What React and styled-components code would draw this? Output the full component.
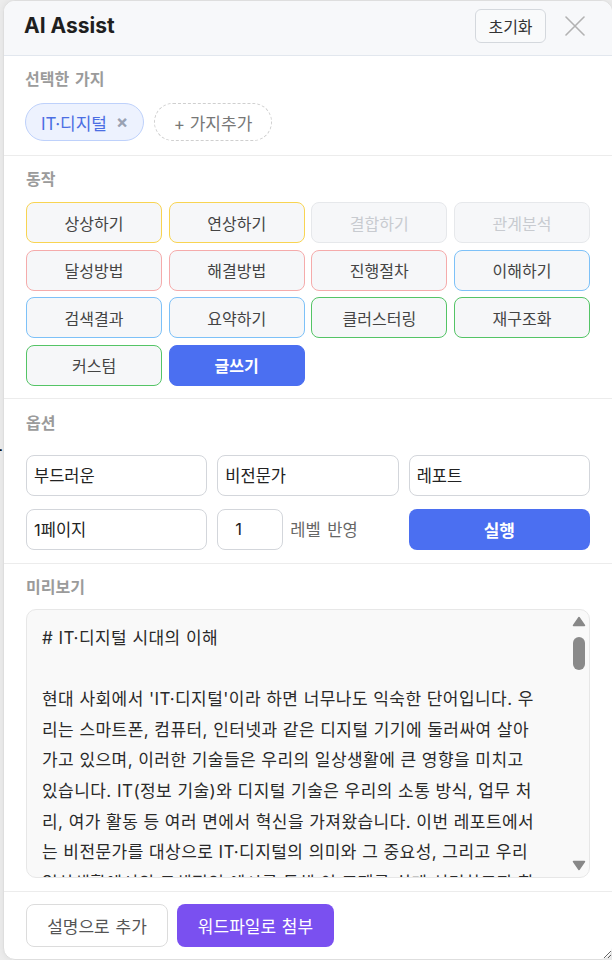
import React from 'react';
import styled, { createGlobalStyle, css } from 'styled-components';

const Global = createGlobalStyle`
  html, body { margin: 0; padding: 0; }
  body {
    background: #ececec;
    overflow: hidden;
    font-family: Inter, "Noto Sans CJK KR", sans-serif;
    color: #222;
  }
  * { box-sizing: border-box; }
`;

const Stage = styled.div`
  position: relative;
  height: 960px;
  padding-left: 3px;
`;

const UnderText = styled.span`
  position: absolute;
  left: -20px;
  top: 430px;
  font-size: 25px;
  line-height: 32px;
  color: #111;
  font-family: "Noto Sans CJK KR", sans-serif;
`;

const Panel = styled.div`
  position: relative;
  width: 610px;
  height: 960px;
  background: #fff;
  border-radius: 12px;
  border: 1px solid #dedede;
  box-shadow: 0 0 6px rgba(0, 0, 0, 0.06);
  display: flex;
  flex-direction: column;
  overflow: hidden;
  resize: both;
`;

const Header = styled.div`
  height: 55px;
  flex: none;
  display: flex;
  align-items: center;
  padding: 0 25px 0 20px;
  background: #f7f8fa;
  border-bottom: 1px solid #e2e7ee;
`;

const Title = styled.h1`
  margin: 0;
  flex: 1;
  font-size: 21px;
  font-weight: 700;
  color: #1f1f1f;
  line-height: 24px;
  margin-top: -5px;
`;

const ResetButton = styled.button`
  height: 34px;
  width: 71px;
  margin-top: -5px;
  border: 1px solid #d4d8dd;
  border-radius: 6px;
  background: #f9fafb;
  font-family: inherit;
  font-size: 16px;
  color: #333;
  padding: 0;
`;

const CloseButton = styled.button`
  width: 24px;
  height: 24px;
  margin-left: 17px;
  margin-top: -5px;
  border: none;
  background: none;
  padding: 0;
  display: flex;
  align-items: center;
  justify-content: center;
`;

const Section = styled.section`
  flex: none;
  padding: ${(p) => p.$pad};
  border-bottom: 1px solid #ececec;
  display: flex;
  flex-direction: column;
  gap: ${(p) => p.$gap}px;
`;

const Label = styled.div`
  font-size: 16px;
  font-weight: 700;
  line-height: 20px;
  color: #9b9b9b;
  word-spacing: 2px;
`;

const ChipRow = styled.div`
  display: flex;
  gap: 10px;
`;

const Chip = styled.div`
  height: 38px;
  display: inline-flex;
  align-items: center;
  border-radius: 19px;
  font-size: 17px;
  ${(p) =>
    p.$dashed
      ? css`
          width: 118px;
          justify-content: center;
          border: 1px dashed #cfcfcf;
          color: #777;
          background: #fff;
        `
      : css`
          width: 119px;
          padding-left: 15px;
          gap: 9px;
          border: 1px solid #bed1fb;
          background: #edf2fe;
          color: #4b6ee3;
        `}
`;

const ChipX = styled.span`
  color: #9aa2b3;
  font-size: 18px;
  font-weight: 700;
  line-height: 1;
`;

const ActionGrid = styled.div`
  display: grid;
  grid-template-columns: repeat(4, 1fr);
  gap: 6.5px;
`;

const borderColors = {
  yellow: '#f8d452',
  red: '#f5abab',
  blue: '#7dc1f8',
  green: '#54c466',
  disabled: '#e6e8eb',
};

const ActionButton = styled.button`
  height: 41px;
  border-radius: 8px;
  font-family: inherit;
  font-size: 16px;
  padding: 0;
  ${(p) =>
    p.$variant === 'active'
      ? css`
          background: #4b6ff1;
          border: 1px solid #4b6ff1;
          color: #fff;
          font-weight: 700;
        `
      : css`
          background: #f6f7f9;
          border: 1px solid ${borderColors[p.$variant]};
          color: ${p.$variant === 'disabled' ? '#c8cbd0' : '#444'};
        `}
`;

const OptionGrid = styled.div`
  display: grid;
  grid-template-columns: repeat(3, 1fr);
  column-gap: 10px;
  row-gap: 13px;
`;

const Field = styled.div`
  height: 41px;
  width: ${(p) => (p.$w ? `${p.$w}px` : '100%')};
  border: 1px solid #d3d6db;
  border-radius: 8px;
  background: #fff;
  display: flex;
  align-items: center;
  padding-left: ${(p) => p.$pl || 7}px;
  font-size: 16.5px;
  color: #222;
`;

const LevelCell = styled.div`
  display: flex;
  align-items: center;
  gap: 7px;
`;

const LevelText = styled.span`
  font-size: 16.5px;
  color: #666;
  word-spacing: 2px;
`;

const RunButton = styled.button`
  height: 41px;
  border: none;
  border-radius: 8px;
  background: #4b6ff1;
  color: #fff;
  font-family: inherit;
  font-size: 17px;
  font-weight: 700;
`;

const PreviewBox = styled.div`
  position: relative;
  height: 269px;
  border: 1px solid #e7e7e7;
  border-radius: 10px;
  background: #f9f9f9;
  overflow: hidden;
`;

const PreviewText = styled.div`
  height: 100%;
  overflow: hidden;
  padding: 13px 29px 13px 15px;
  font-size: 17px;
  line-height: 30.7px;
  color: #2a2a2a;
  white-space: pre-wrap;
  letter-spacing: 0.45px;
`;

const ScrollRail = styled.div`
  position: absolute;
  top: 0;
  right: 0;
  bottom: 0;
  width: 21px;
  display: flex;
  flex-direction: column;
  align-items: center;
  padding: 6px 0 6px;
`;

const Thumb = styled.div`
  width: 12px;
  height: 33px;
  margin-top: 10px;
  border-radius: 6px;
  background: #8a8a8a;
`;

const RailSpacer = styled.div`
  flex: 1;
`;

const Footer = styled.div`
  flex: 1;
  display: flex;
  gap: 9px;
  padding: 12px 22px;
  align-items: flex-start;
`;

const FooterButton = styled.button`
  height: 43px;
  border-radius: 8px;
  font-family: inherit;
  font-size: 17px;
  padding: 0;
  word-spacing: 1px;
  width: ${(p) => p.$w}px;
  ${(p) =>
    p.$primary
      ? css`
          background: #7a50f0;
          border: none;
          color: #fff;
        `
      : css`
          background: #fff;
          border: 1px solid #dcdcdc;
          color: #555;
        `}
`;

const actions = [
  ['상상하기', 'yellow'],
  ['연상하기', 'yellow'],
  ['결합하기', 'disabled'],
  ['관계분석', 'disabled'],
  ['달성방법', 'red'],
  ['해결방법', 'red'],
  ['진행절차', 'red'],
  ['이해하기', 'blue'],
  ['검색결과', 'blue'],
  ['요약하기', 'blue'],
  ['클러스터링', 'green'],
  ['재구조화', 'green'],
  ['커스텀', 'green'],
  ['글쓰기', 'active'],
];

const previewText = `# IT·디지털 시대의 이해

현대 사회에서 'IT·디지털'이라 하면 너무나도 익숙한 단어입니다. 우
리는 스마트폰, 컴퓨터, 인터넷과 같은 디지털 기기에 둘러싸여 살아
가고 있으며, 이러한 기술들은 우리의 일상생활에 큰 영향을 미치고
있습니다. IT(정보 기술)와 디지털 기술은 우리의 소통 방식, 업무 처
리, 여가 활동 등 여러 면에서 혁신을 가져왔습니다. 이번 레포트에서
는 비전문가를 대상으로 IT·디지털의 의미와 그 중요성, 그리고 우리
일상생활에서의 구체적인 예시를 통해 이 주제를 쉽게 설명하고자 합
니다.`;

const CloseIcon = () => (
  <svg width="20" height="20" viewBox="0 0 20 20" fill="none">
    <path d="M1 1L19 19M19 1L1 19" stroke="#b2b2b2" strokeWidth="1.6" strokeLinecap="round" />
  </svg>
);

const Arrow = ({ down }) => (
  <svg width="14" height="11" viewBox="0 0 14 11">
    <path
      d={down ? 'M1.5 1.5 L7 9.5 L12.5 1.5 Z' : 'M1.5 9.5 L7 1.5 L12.5 9.5 Z'}
      fill="#888"
      stroke="#888"
      strokeWidth="1.5"
      strokeLinejoin="round"
    />
  </svg>
);

export default function App() {
  return (
    <>
      <Global />
      <Stage>
        <UnderText>유</UnderText>
        <Panel>
          <Header>
            <Title>AI Assist</Title>
            <ResetButton>초기화</ResetButton>
            <CloseButton aria-label="닫기">
              <CloseIcon />
            </CloseButton>
          </Header>

          <Section $pad="13px 22px 14px 21px" $gap={14}>
            <Label>선택한 가지</Label>
            <ChipRow>
              <Chip>
                IT·디지털 <ChipX>×</ChipX>
              </Chip>
              <Chip $dashed>+ 가지추가</Chip>
            </ChipRow>
          </Section>

          <Section $pad="13px 22px 12px 22px" $gap={13}>
            <Label>동작</Label>
            <ActionGrid>
              {actions.map(([label, variant]) => (
                <ActionButton key={label} $variant={variant}>
                  {label}
                </ActionButton>
              ))}
            </ActionGrid>
          </Section>

          <Section $pad="14px 22px 13px 22px" $gap={22}>
            <Label>옵션</Label>
            <OptionGrid>
              <Field>부드러운</Field>
              <Field>비전문가</Field>
              <Field>레포트</Field>
              <Field>1페이지</Field>
              <LevelCell>
                <Field $w={66} $pl={17}>1</Field>
                <LevelText>레벨 반영</LevelText>
              </LevelCell>
              <RunButton>실행</RunButton>
            </OptionGrid>
          </Section>

          <Section $pad="13px 22px 13px 22px" $gap={12}>
            <Label>미리보기</Label>
            <PreviewBox>
              <PreviewText>{previewText}</PreviewText>
              <ScrollRail>
                <Arrow />
                <Thumb />
                <RailSpacer />
                <Arrow down />
              </ScrollRail>
            </PreviewBox>
          </Section>

          <Footer>
            <FooterButton $w={142}>설명으로 추가</FooterButton>
            <FooterButton $w={157} $primary>
              워드파일로 첨부
            </FooterButton>
          </Footer>
        </Panel>
      </Stage>
    </>
  );
}
